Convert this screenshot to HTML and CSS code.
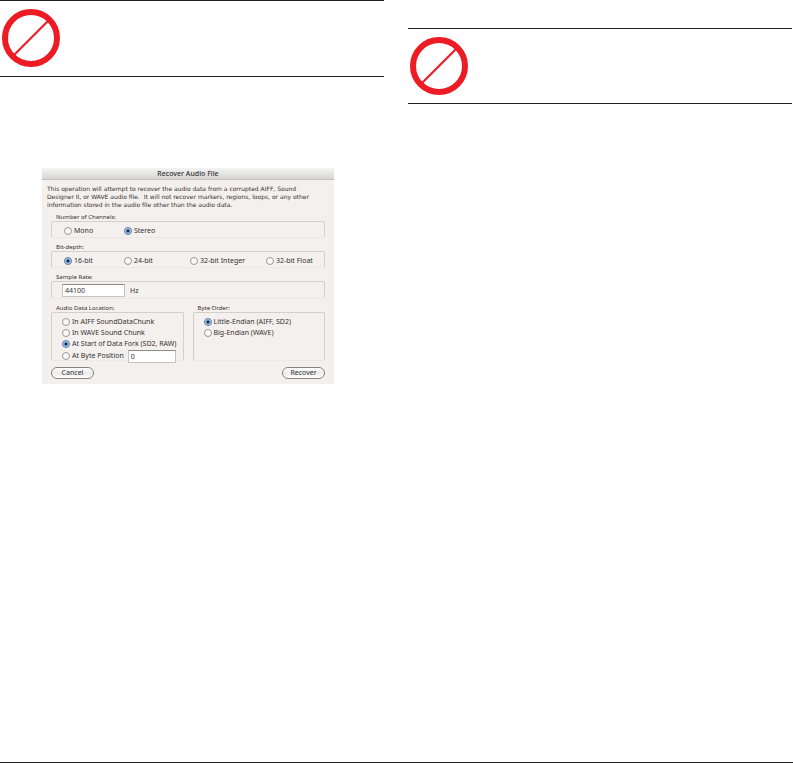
FILE: index.html
```
<!DOCTYPE html>
<html lang="en">

<head>
  <meta charset="UTF-8">
  <meta name="viewport" content="width=device-width, initial-scale=1.0">
  <title>Recover Audio File</title>
  <link rel="stylesheet" href="styles.css">
</head>

<body>
  <main class="columns">
    <div class="column">
      <div class="notice">
        <svg class="notice-icon" viewBox="0 0 58 58" aria-hidden="true">
          <circle cx="29" cy="29" r="26" fill="none" stroke="#ed1c24" stroke-width="6" />
          <path d="M12 46 L46 12" stroke="#ed1c24" stroke-width="2.2" />
        </svg>
      </div>

      <form class="dialog">
        <h1 class="dialog-title">Recover Audio File</h1>
        <div class="dialog-body">
          <p class="intro">This operation will attempt to recover the audio data from a corrupted AIFF, Sound<br>
            Designer II, or WAVE audio file.&nbsp; It will not recover markers, regions, loops, or any other<br>
            information stored in the audio file other than the audio data.</p>

          <fieldset class="group">
            <legend>Number of Channels:</legend>
            <div class="box row">
              <label><input type="radio" name="channels"><span>Mono</span></label>
              <label><input type="radio" name="channels" checked><span>Stereo</span></label>
            </div>
          </fieldset>

          <fieldset class="group">
            <legend>Bit-depth:</legend>
            <div class="box row">
              <label><input type="radio" name="depth" checked><span>16-bit</span></label>
              <label><input type="radio" name="depth"><span>24-bit</span></label>
              <label><input type="radio" name="depth"><span>32-bit Integer</span></label>
              <label><input type="radio" name="depth"><span>32-bit Float</span></label>
            </div>
          </fieldset>

          <fieldset class="group">
            <legend>Sample Rate:</legend>
            <div class="box rate">
              <input class="field rate-field" id="rate" type="text" value="44100">
              <label for="rate">Hz</label>
            </div>
          </fieldset>

          <div class="pair">
            <fieldset class="group">
              <legend>Audio Data Location:</legend>
              <div class="box list">
                <label><input type="radio" name="location"><span>In AIFF SoundDataChunk</span></label>
                <label><input type="radio" name="location"><span>In WAVE Sound Chunk</span></label>
                <label><input type="radio" name="location" checked><span>At Start of Data Fork (SD2, RAW)</span></label>
                <div class="position">
                  <label><input type="radio" name="location"><span>At Byte Position</span></label>
                  <input class="field position-field" type="text" value="0" aria-label="Byte position">
                </div>
              </div>
            </fieldset>

            <fieldset class="group">
              <legend>Byte Order:</legend>
              <div class="box list">
                <label><input type="radio" name="order" checked><span>Little-Endian (AIFF, SD2)</span></label>
                <label><input type="radio" name="order"><span>Big-Endian (WAVE)</span></label>
              </div>
            </fieldset>
          </div>

          <div class="actions">
            <button class="button" type="button">Cancel</button>
            <button class="button" type="button">Recover</button>
          </div>
        </div>
      </form>
    </div>

    <div class="column column-right">
      <div class="notice">
        <svg class="notice-icon" viewBox="0 0 58 58" aria-hidden="true">
          <circle cx="29" cy="29" r="26" fill="none" stroke="#ed1c24" stroke-width="6" />
          <path d="M12 46 L46 12" stroke="#ed1c24" stroke-width="2.2" />
        </svg>
      </div>
    </div>
  </main>
</body>

</html>
```
FILE: styles.css
```
* {
  box-sizing: border-box;
}

body {
  margin: 0;
  min-height: 100vh;
  display: flex;
  flex-direction: column;
  background-color: white;
  color: #333;
  border-bottom: 1px solid #231f20;
  font-family: "Noto Sans", "Open Sans", sans-serif;
  font-size: 7px;
  line-height: 8px;
}

.columns {
  display: grid;
  grid-template-columns: 1fr 1fr;
  gap: 24px;
  padding-right: 1px;
}

.column-right {
  padding-top: 28px;
}

.notice {
  height: 77px;
  padding: 8px 2px;
  border-top: 1px solid #231f20;
  border-bottom: 1px solid #231f20;
}

.column-right .notice {
  height: 76px;
}

.notice-icon {
  display: block;
  width: 58px;
  height: 58px;
}

/* Dialog window */
.dialog {
  max-width: 292px;
  margin: 91px 0 0 42px;
  background-color: #f3f0ed;
}

.dialog-title {
  margin: 0;
  height: 12px;
  border-bottom: 1px solid #c4c2c0;
  border-radius: 3px 3px 0 0;
  background: linear-gradient(#f4f4f4, #d6d5d4);
  font-size: 7px;
  font-weight: 500;
  line-height: 12px;
  text-align: center;
}

.dialog-body {
  padding: 5px 9px;
}

.intro {
  margin: 0 -4px 4px;
  font-family: "DejaVu Sans", sans-serif;
  font-size: 6px;
  white-space: nowrap;
}

.group {
  min-width: 0;
  margin: 0 0 5px;
  padding: 0;
  border: 0;
}

.group legend {
  padding: 0 5px;
  font-size: 6px;
}

.box {
  border: 1px solid #d2cfcc;
  border-bottom-color: #ebe8e5;
  border-radius: 2px;
}

.box label {
  display: flex;
  align-items: center;
  gap: 2px;
  white-space: nowrap;
}

.row {
  display: grid;
  grid-template-columns: 60px 66px 76px auto;
  height: 17px;
  padding: 3px 0 0 12px;
}

/* Controls */
input[type="radio"] {
  appearance: none;
  flex: none;
  width: 8px;
  height: 8px;
  margin: 0;
  border: 1px solid #999;
  border-radius: 50%;
  background-color: #fafafa;
}

input[type="radio"]:checked {
  border-color: #5877a5;
  background: radial-gradient(circle, #16284a 0 1px, #8fb9e6 2px, #b9dbf8 3px);
}

.field {
  border: 1px solid #c6c4c2;
  border-top-color: #8d8b89;
  border-radius: 0;
  background-color: white;
  color: #333;
  font: inherit;
}

.rate {
  display: flex;
  align-items: center;
  gap: 5px;
  height: 18px;
  padding: 1px 0 0 10px;
}

.rate-field {
  width: 63px;
  height: 13px;
  padding: 0 2px;
}

.pair {
  display: grid;
  grid-template-columns: 1fr 1fr;
  gap: 9px;
}

.list {
  display: flex;
  flex-direction: column;
  gap: 3px;
  height: 49px;
  padding: 5px 0 0 10px;
}

.position {
  display: flex;
  align-items: center;
  height: 10px;
}

.position-field {
  width: 48px;
  height: 13px;
  margin-left: 4px;
  padding: 0 2px;
}

.actions {
  display: flex;
  justify-content: space-between;
  padding-top: 1px;
}

.button {
  width: 43px;
  height: 12px;
  padding: 0;
  border: 1px solid #858381;
  border-radius: 6px;
  background: linear-gradient(#fff, #ebebeb 50%, #fff);
  color: #333;
  font: inherit;
}
```
